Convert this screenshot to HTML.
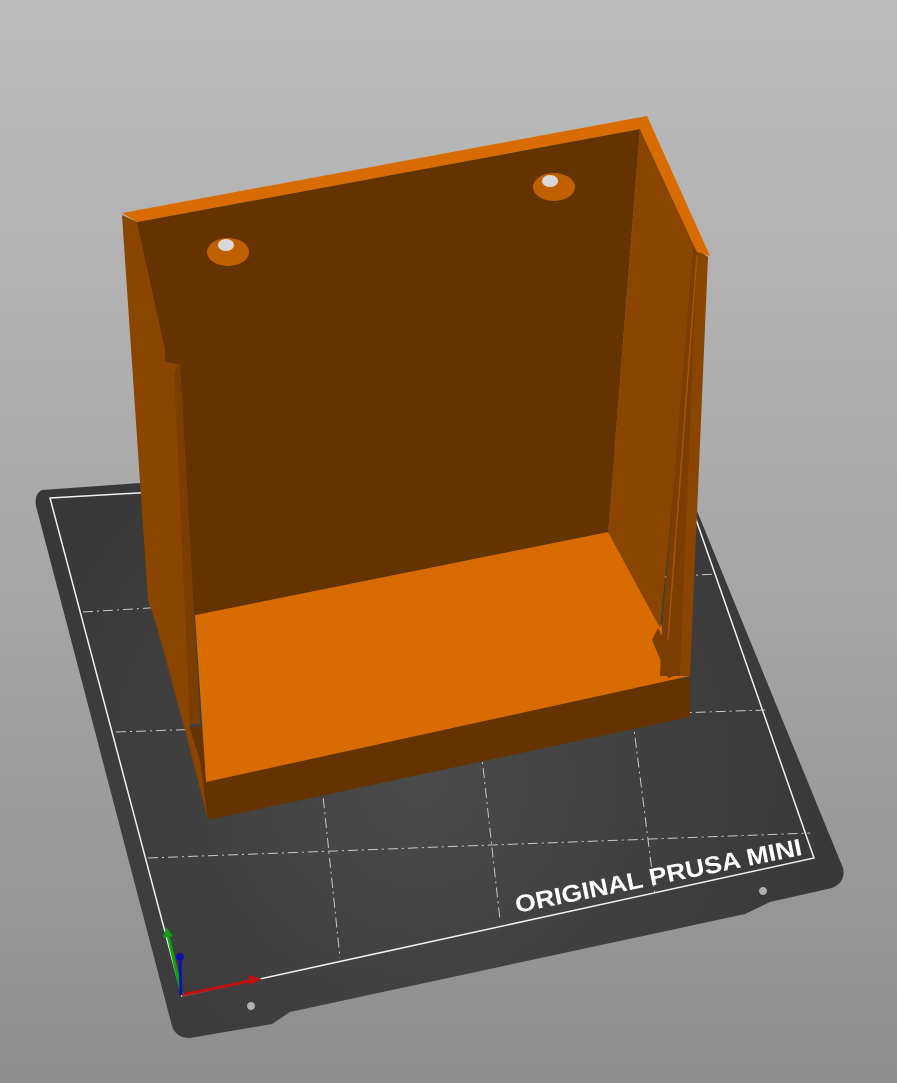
<!DOCTYPE html>
<html><head><meta charset="utf-8"><style>
html,body{margin:0;padding:0;width:897px;height:1083px;overflow:hidden}
body{background:linear-gradient(#bcbcbc,#a8a8a8 50%,#8e8e8e)}
svg{position:absolute;left:0;top:0}
</style></head><body>
<svg width="897" height="1083" viewBox="0 0 897 1083">
<defs>
<radialGradient id="bg" cx="420" cy="780" r="420" gradientUnits="userSpaceOnUse">
<stop offset="0" stop-color="#4a4a4a"/><stop offset="1" stop-color="#383838"/></radialGradient>
</defs>
<path d="M42 490 L670 445 L843 868 Q846 882 832 888 L770 902 L745 914 L290 1012 L272 1024 L190 1038 Q176 1038 172 1026 L36 506 Q34 494 42 490 Z" fill="url(#bg)"/>
<circle cx="763" cy="891" r="4" fill="#b0b0b0"/>
<circle cx="251" cy="1006" r="4" fill="#b0b0b0"/>
<path d="M50 498 L676 462 L814 858 L182 996 Z" fill="none" stroke="#f0f0f0" stroke-width="1.5"/>
<g stroke="#c8c8c8" stroke-width="1" stroke-dasharray="10 4 2 4" fill="none">
<line x1="83" y1="612" x2="715" y2="574"/>
<line x1="116" y1="732" x2="765" y2="710"/>
<line x1="148" y1="858" x2="810" y2="833"/>
<line x1="290" y1="480" x2="340" y2="958"/>
<line x1="450" y1="470" x2="500" y2="920"/>
<line x1="600" y1="460" x2="655" y2="895"/>
</g>
<text x="0" y="0" transform="translate(517 913) rotate(-11.5)" font-family="Liberation Sans, sans-serif" font-weight="bold" font-size="24" textLength="292" lengthAdjust="spacingAndGlyphs" fill="#ffffff">ORIGINAL PRUSA MINI</text>
<line x1="182" y1="995" x2="255" y2="980" stroke="#c01010" stroke-width="3"/>
<polygon points="248,975 262,979 250,985" fill="#c01010"/>
<line x1="182" y1="995" x2="168" y2="935" stroke="#10a010" stroke-width="3"/>
<polygon points="163,938 166,927 173,936" fill="#10a010"/>
<line x1="181" y1="995" x2="180" y2="957" stroke="#1010b0" stroke-width="3"/>
<circle cx="180" cy="957" r="4" fill="#1010b0"/>
<polygon points="185,728 690,678 690,717 208,820" fill="#653300"/>
<polygon points="195,615 608,532 690,676 206,782" fill="#d86c00"/>
<polygon points="137,222 640,129 608,532 195,615" fill="#653300"/>
<polygon points="640,129 697,252 660,628 608,532" fill="#8a4600"/>
<polygon points="693,247 708,257 680,676 660,676 662,628" fill="#7a3e00"/>
<polygon points="697,252 708,257 690,676 680,676" fill="#8a4600"/>
<line x1="697" y1="255" x2="668" y2="640" stroke="#a65400" stroke-width="1.5"/>
<polygon points="658,628 680,674 668,678 652,640" fill="#7a3e00"/>
<polygon points="122,215 137,222 165,350 165,362 180,362 200,720 190,725 185,728 158,630 148,600" fill="#8a4600"/>
<polygon points="165,350 180,355 181,365 166,362" fill="#653300"/>
<polygon points="180,362 200,724 190,724 174,372" fill="#7a3e00"/>
<polygon points="148,600 185,728 208,820 185,730" fill="#8a4600"/>
<polygon points="158,630 185,728 208,820 200,760" fill="#8a4600"/>
<polygon points="122,213 647,116 710,256 697,252 640,129 137,222" fill="#d86c00"/>
<ellipse cx="228" cy="252" rx="21" ry="14" fill="#c06000"/>
<ellipse cx="226" cy="245" rx="8" ry="6" fill="#d8d8d8"/>
<ellipse cx="554" cy="187" rx="21" ry="14" fill="#c06000"/>
<ellipse cx="550" cy="181" rx="8" ry="6" fill="#d8d8d8"/>
</svg>
</body></html>
